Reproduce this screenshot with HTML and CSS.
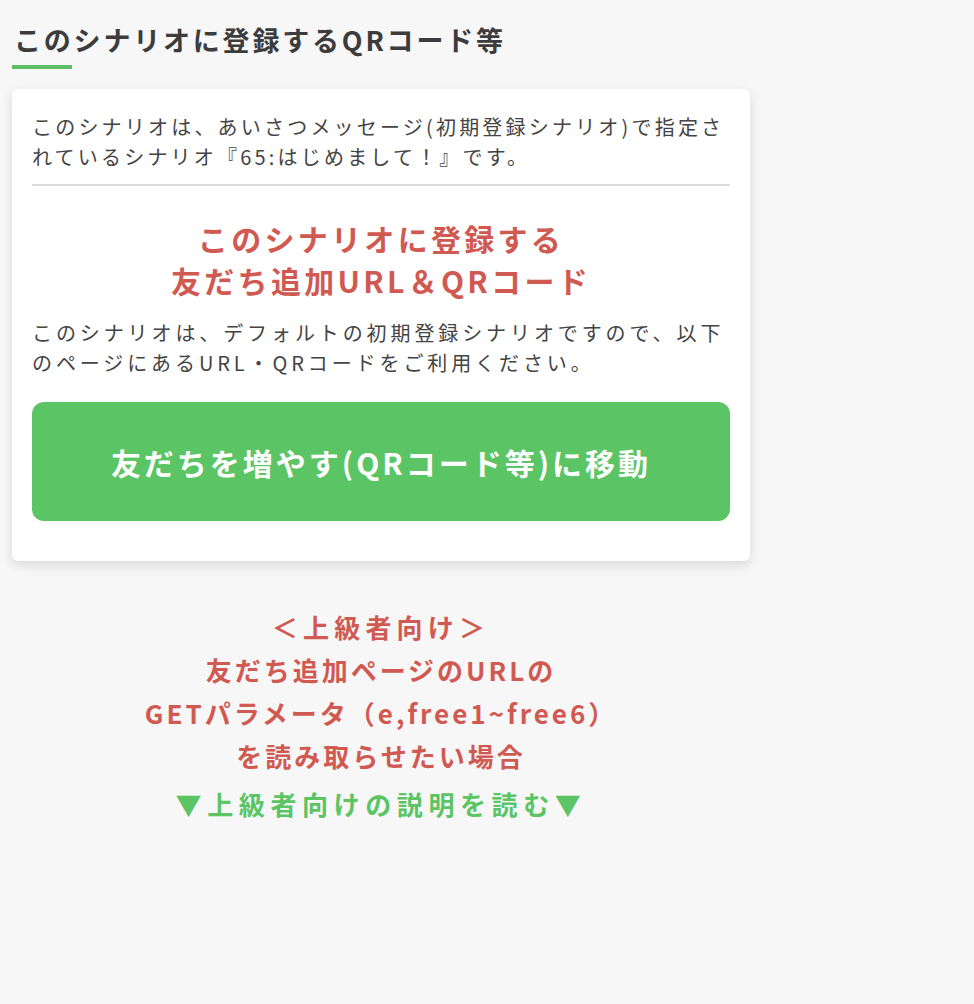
FILE: index.html
```html
<!DOCTYPE html>
<html lang="ja">
<head>
  <meta charset="UTF-8" />
  <meta name="viewport" content="width=device-width, initial-scale=1.0" />
  <title>このシナリオに登録するQRコード等</title>
  <link rel="stylesheet" href="styles.css">
</head>
<body>
  <div class="page">
    <h2 class="section-title">このシナリオに登録するQRコード等</h2>

    <div class="card">
      <p class="note">このシナリオは、あいさつメッセージ(初期登録シナリオ)で指定さ<br>れているシナリオ『65:はじめまして！』です。</p>
      <hr class="divider" />

      <h3 class="red-head">このシナリオに登録する<br>友だち追加URL＆QRコード</h3>
      <p class="note note-wide">このシナリオは、デフォルトの初期登録シナリオですので、以下<br>のページにあるURL・QRコードをご利用ください。</p>

      <a class="big-button" href="#">友だちを増やす(QRコード等)に移動</a>
    </div>

    <div class="advanced">
      <p class="advanced-title"><span class="bracket-line">＜上級者向け＞</span><br>友だち追加ページのURLの<br>GETパラメータ（e,free1~free6）<br>を読み取らせたい場合</p>
      <a class="advanced-link" href="#">▼上級者向けの説明を読む▼</a>
    </div>
  </div>
</body>
</html>
```

FILE: styles.css
```css
body {
  margin: 0;
  background-color: #f7f7f7;
  font-family: "Noto Sans CJK JP", "Noto Sans", sans-serif;
  color: #444;
}
.page {
  width: 738px;
  padding: 21px 12px 40px;
}
.section-title {
  margin: 0 0 0 2px;
  font-size: 27px;
  line-height: 38px;
  font-weight: 700;
  letter-spacing: 2.8px;
  color: #3c3c3c;
}
.section-title::after {
  content: "";
  display: block;
  width: 60px;
  height: 4px;
  margin: 6px 0 0 -2px;
  background-color: #5cbf68;
}
.card {
  margin-top: 20px;
  padding: 23px 20px 40px;
  background-color: #fff;
  border-radius: 6px;
  box-shadow: 0 4px 12px rgba(0, 0, 0, 0.13);
}
.note {
  margin: 0;
  font-size: 20px;
  line-height: 30px;
  letter-spacing: 3.2px;
  white-space: nowrap;
  color: #444;
}
.note-wide {
  letter-spacing: 3.9px;
}
.divider {
  margin: 12px 0 31px;
  border: none;
  height: 2px;
  background-color: #dcdcdc;
}
.red-head {
  margin: 0 0 17px;
  text-align: center;
  font-size: 30px;
  line-height: 42px;
  font-weight: 700;
  letter-spacing: 3.3px;
  color: #d05a52;
}
.big-button {
  display: flex;
  align-items: center;
  justify-content: center;
  margin-top: 24px;
  height: 119px;
  border-radius: 12px;
  background-color: #5bc464;
  color: #fff;
  font-size: 30px;
  font-weight: 700;
  letter-spacing: 3px;
  text-decoration: none;
}
.advanced {
  margin-top: 44px;
  text-align: center;
}
.advanced-title {
  margin: 0;
  font-size: 26px;
  line-height: 43px;
  font-weight: 700;
  letter-spacing: 3px;
  color: #d05a52;
}
.bracket-line {
  letter-spacing: 5.2px;
}
.advanced-link {
  display: inline-block;
  margin-top: 5px;
  font-size: 26px;
  line-height: 43px;
  font-weight: 700;
  letter-spacing: 5.6px;
  color: #5bc464;
  text-decoration: none;
}
```
